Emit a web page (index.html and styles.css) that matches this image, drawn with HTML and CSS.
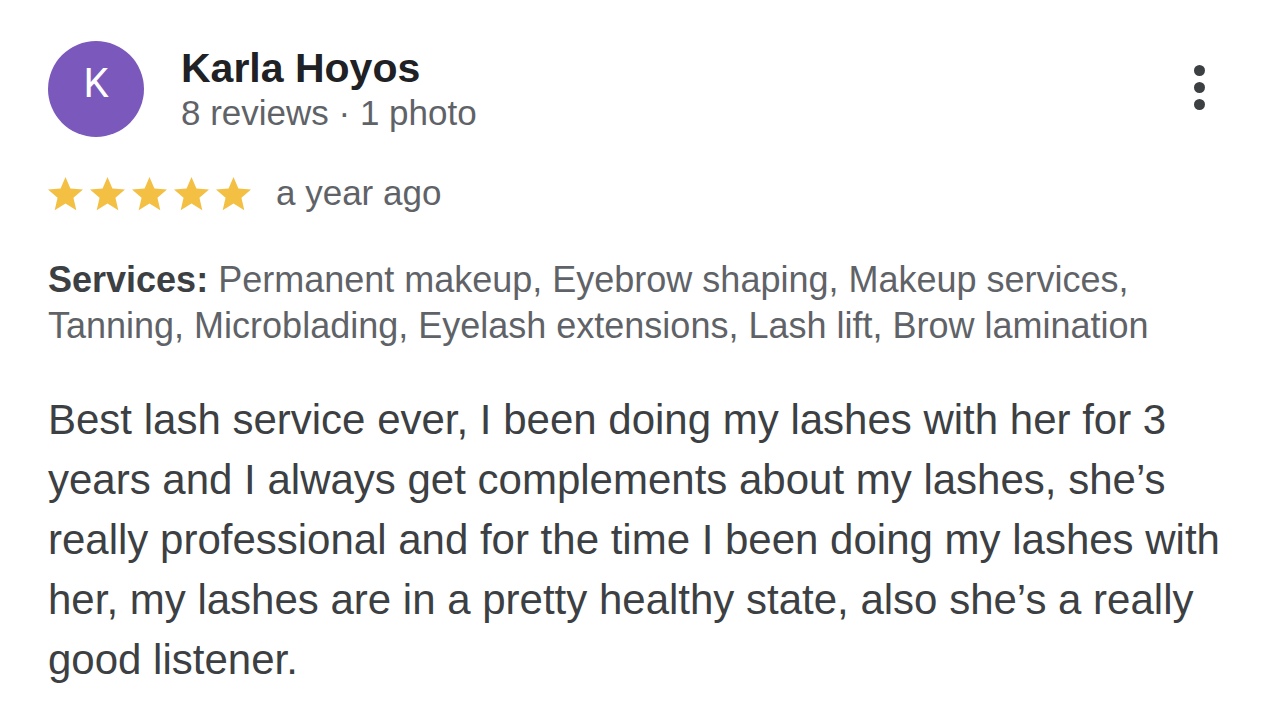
FILE: index.html
```html
<!DOCTYPE html>
<html lang="en">
<head>
<meta charset="utf-8">
<title>Review</title>
<link rel="stylesheet" href="styles.css">
</head>
<body>
<div class="review">
  <div class="header">
    <div class="avatar">K</div>
    <div class="author">
      <div class="name">Karla Hoyos</div>
      <div class="meta">8 reviews · 1 photo</div>
    </div>
    <div class="menu" aria-label="More options">
      <span class="dot"></span><span class="dot"></span><span class="dot"></span>
    </div>
  </div>
  <div class="rating">
    <div class="stars">
      <svg class="star" viewBox="2 1.5 20 20"><path d="M12 17.27L18.18 21l-1.64-7.03L22 9.24l-7.19-.61L12 2 9.19 8.63 2 9.24l5.46 4.73L5.82 21z"/></svg>
      <svg class="star" viewBox="2 1.5 20 20"><path d="M12 17.27L18.18 21l-1.64-7.03L22 9.24l-7.19-.61L12 2 9.19 8.63 2 9.24l5.46 4.73L5.82 21z"/></svg>
      <svg class="star" viewBox="2 1.5 20 20"><path d="M12 17.27L18.18 21l-1.64-7.03L22 9.24l-7.19-.61L12 2 9.19 8.63 2 9.24l5.46 4.73L5.82 21z"/></svg>
      <svg class="star" viewBox="2 1.5 20 20"><path d="M12 17.27L18.18 21l-1.64-7.03L22 9.24l-7.19-.61L12 2 9.19 8.63 2 9.24l5.46 4.73L5.82 21z"/></svg>
      <svg class="star" viewBox="2 1.5 20 20"><path d="M12 17.27L18.18 21l-1.64-7.03L22 9.24l-7.19-.61L12 2 9.19 8.63 2 9.24l5.46 4.73L5.82 21z"/></svg>
    </div>
    <span class="date">a year ago</span>
  </div>
  <p class="services"><b>Services:</b> Permanent makeup, Eyebrow shaping, Makeup services, Tanning, Microblading, Eyelash extensions, Lash lift, Brow lamination</p>
  <p class="text">Best lash service ever, I been doing my lashes with her for 3 years and I always get complements about my lashes, she’s really professional and for the time I been doing my lashes with her, my lashes are in a pretty healthy state, also she’s a really good listener.</p>
</div>
</body>
</html>
```
FILE: styles.css
```css
html, body {
  margin: 0;
  padding: 0;
  background: #ffffff;
}

body {
  font-family: "Liberation Sans", Arial, sans-serif;
  width: 1284px;
  height: 718px;
  overflow: hidden;
}

.review {
  padding: 41px 0 0 48px;
}

.header {
  display: flex;
  align-items: flex-start;
}

.avatar {
  width: 96px;
  height: 96px;
  border-radius: 50%;
  background: #7b58bb;
  color: #ffffff;
  font-family: Roboto, "Liberation Sans", sans-serif;
  font-size: 40px;
  line-height: 86px;
  text-align: center;
  flex: none;
}

.author {
  margin-left: 37px;
  padding-top: 3px;
}

.name {
  font-size: 41px;
  font-weight: bold;
  line-height: 48px;
  color: #202124;
}

.meta {
  font-size: 35px;
  line-height: 42px;
  color: #5f6368;
}

.menu {
  margin-left: auto;
  margin-right: 73px;
  margin-top: 24px;
  width: 24px;
  display: flex;
  flex-direction: column;
  align-items: center;
  gap: 6px;
}

.dot {
  width: 11px;
  height: 11px;
  border-radius: 50%;
  background: #3c4043;
}

.rating {
  display: flex;
  align-items: center;
  height: 40px;
  margin-top: 36px;
}

.stars {
  display: flex;
  gap: 7px;
}

.star {
  width: 35px;
  height: 35px;
  fill: #f3c043;
  display: block;
}

.date {
  margin-left: 25px;
  font-size: 35px;
  line-height: 40px;
  color: #5f6368;
}

.services {
  margin: 44px 0 0;
  font-size: 36px;
  line-height: 46px;
  color: #5f6368;
  width: 1182px;
}

.services b {
  color: #3c4043;
}

.text {
  margin: 41px 0 0;
  font-size: 42px;
  line-height: 60px;
  color: #3c4043;
  width: 1182px;
}
```
